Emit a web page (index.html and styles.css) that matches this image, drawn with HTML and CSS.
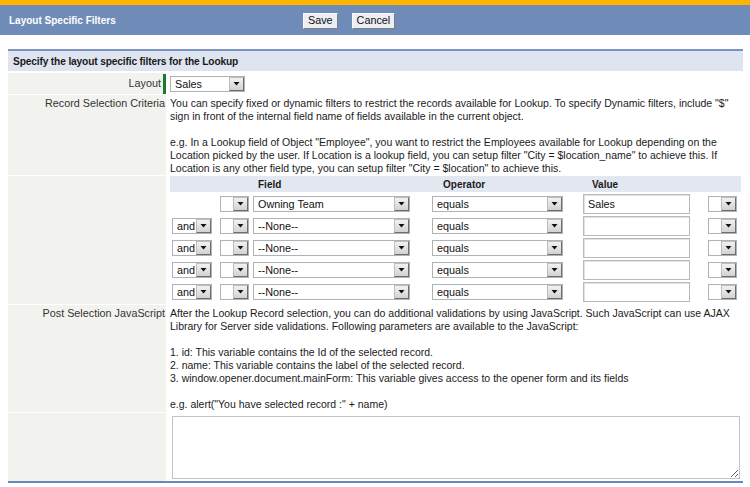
FILE: index.html
```html
<!DOCTYPE html>
<html>
<head>
<meta charset="utf-8">
<title>Layout Specific Filters</title>
<link rel="stylesheet" href="styles.css">
</head>
<body>
<div class="topbar"></div>
<div class="header">
  <div class="title">Layout Specific Filters</div>
  <div class="actions">
    <button class="btn">Save</button>
    <button class="btn">Cancel</button>
  </div>
</div>
<div class="page">
  <div class="section">
    <div class="section-head">Specify the layout specific filters for the Lookup</div>
    <div class="detail">
      <div class="lbl lbl-req"><span class="lbl-text">Layout</span><span class="req"></span></div>
      <div class="val val-layout">
        <span class="sel sel-layout"><span class="sel-text">Sales</span><span class="sel-btn"><svg width="7" height="4" viewBox="0 0 7 4"><path d="M0.5 0h6L3.5 3.5z"/></svg></span></span>
      </div>

      <div class="lbl lbl-top">Record Selection Criteria</div>
      <div class="val val-text val-record">
        <p>You can specify fixed or dynamic filters to restrict the records available for Lookup. To specify Dynamic filters, include "$" sign in front of the internal field name of fields available in the current object.</p>
        <p>e.g. In a Lookup field of Object "Employee", you want to restrict the Employees available for Lookup depending on the Location picked by the user. If Location is a lookup field, you can setup filter "City = $location_name" to achieve this. If Location is any other field type, you can setup filter "City = $location" to achieve this.</p>
      </div>

      <div class="lbl"></div>
      <div class="val val-filters">
        <div class="ftable">
          <div class="frow fhead">
            <span class="c-and"></span>
            <span class="c-b1"></span>
            <span class="c-field h-field">Field</span>
            <span class="c-op h-op">Operator</span>
            <span class="c-val h-val">Value</span>
            <span class="c-b2"></span>
          </div>

          <div class="frow">
            <span class="c-and"></span>
            <span class="sel c-b1"><span class="sel-text"></span><span class="sel-btn"><svg width="7" height="4" viewBox="0 0 7 4"><path d="M0.5 0h6L3.5 3.5z"/></svg></span></span>
            <span class="sel c-field"><span class="sel-text">Owning Team</span><span class="sel-btn"><svg width="7" height="4" viewBox="0 0 7 4"><path d="M0.5 0h6L3.5 3.5z"/></svg></span></span>
            <span class="sel c-op"><span class="sel-text">equals</span><span class="sel-btn"><svg width="7" height="4" viewBox="0 0 7 4"><path d="M0.5 0h6L3.5 3.5z"/></svg></span></span>
            <span class="inp c-val">Sales</span>
            <span class="sel c-b2"><span class="sel-text"></span><span class="sel-btn"><svg width="7" height="4" viewBox="0 0 7 4"><path d="M0.5 0h6L3.5 3.5z"/></svg></span></span>
          </div>

          <div class="frow">
            <span class="sel c-and"><span class="sel-text">and</span><span class="sel-btn"><svg width="7" height="4" viewBox="0 0 7 4"><path d="M0.5 0h6L3.5 3.5z"/></svg></span></span>
            <span class="sel c-b1"><span class="sel-text"></span><span class="sel-btn"><svg width="7" height="4" viewBox="0 0 7 4"><path d="M0.5 0h6L3.5 3.5z"/></svg></span></span>
            <span class="sel c-field"><span class="sel-text">--None--</span><span class="sel-btn"><svg width="7" height="4" viewBox="0 0 7 4"><path d="M0.5 0h6L3.5 3.5z"/></svg></span></span>
            <span class="sel c-op"><span class="sel-text">equals</span><span class="sel-btn"><svg width="7" height="4" viewBox="0 0 7 4"><path d="M0.5 0h6L3.5 3.5z"/></svg></span></span>
            <span class="inp c-val"></span>
            <span class="sel c-b2"><span class="sel-text"></span><span class="sel-btn"><svg width="7" height="4" viewBox="0 0 7 4"><path d="M0.5 0h6L3.5 3.5z"/></svg></span></span>
          </div>

          <div class="frow">
            <span class="sel c-and"><span class="sel-text">and</span><span class="sel-btn"><svg width="7" height="4" viewBox="0 0 7 4"><path d="M0.5 0h6L3.5 3.5z"/></svg></span></span>
            <span class="sel c-b1"><span class="sel-text"></span><span class="sel-btn"><svg width="7" height="4" viewBox="0 0 7 4"><path d="M0.5 0h6L3.5 3.5z"/></svg></span></span>
            <span class="sel c-field"><span class="sel-text">--None--</span><span class="sel-btn"><svg width="7" height="4" viewBox="0 0 7 4"><path d="M0.5 0h6L3.5 3.5z"/></svg></span></span>
            <span class="sel c-op"><span class="sel-text">equals</span><span class="sel-btn"><svg width="7" height="4" viewBox="0 0 7 4"><path d="M0.5 0h6L3.5 3.5z"/></svg></span></span>
            <span class="inp c-val"></span>
            <span class="sel c-b2"><span class="sel-text"></span><span class="sel-btn"><svg width="7" height="4" viewBox="0 0 7 4"><path d="M0.5 0h6L3.5 3.5z"/></svg></span></span>
          </div>

          <div class="frow">
            <span class="sel c-and"><span class="sel-text">and</span><span class="sel-btn"><svg width="7" height="4" viewBox="0 0 7 4"><path d="M0.5 0h6L3.5 3.5z"/></svg></span></span>
            <span class="sel c-b1"><span class="sel-text"></span><span class="sel-btn"><svg width="7" height="4" viewBox="0 0 7 4"><path d="M0.5 0h6L3.5 3.5z"/></svg></span></span>
            <span class="sel c-field"><span class="sel-text">--None--</span><span class="sel-btn"><svg width="7" height="4" viewBox="0 0 7 4"><path d="M0.5 0h6L3.5 3.5z"/></svg></span></span>
            <span class="sel c-op"><span class="sel-text">equals</span><span class="sel-btn"><svg width="7" height="4" viewBox="0 0 7 4"><path d="M0.5 0h6L3.5 3.5z"/></svg></span></span>
            <span class="inp c-val"></span>
            <span class="sel c-b2"><span class="sel-text"></span><span class="sel-btn"><svg width="7" height="4" viewBox="0 0 7 4"><path d="M0.5 0h6L3.5 3.5z"/></svg></span></span>
          </div>

          <div class="frow">
            <span class="sel c-and"><span class="sel-text">and</span><span class="sel-btn"><svg width="7" height="4" viewBox="0 0 7 4"><path d="M0.5 0h6L3.5 3.5z"/></svg></span></span>
            <span class="sel c-b1"><span class="sel-text"></span><span class="sel-btn"><svg width="7" height="4" viewBox="0 0 7 4"><path d="M0.5 0h6L3.5 3.5z"/></svg></span></span>
            <span class="sel c-field"><span class="sel-text">--None--</span><span class="sel-btn"><svg width="7" height="4" viewBox="0 0 7 4"><path d="M0.5 0h6L3.5 3.5z"/></svg></span></span>
            <span class="sel c-op"><span class="sel-text">equals</span><span class="sel-btn"><svg width="7" height="4" viewBox="0 0 7 4"><path d="M0.5 0h6L3.5 3.5z"/></svg></span></span>
            <span class="inp c-val"></span>
            <span class="sel c-b2"><span class="sel-text"></span><span class="sel-btn"><svg width="7" height="4" viewBox="0 0 7 4"><path d="M0.5 0h6L3.5 3.5z"/></svg></span></span>
          </div>
        </div>
      </div>

      <div class="lbl lbl-top lbl-post">Post Selection JavaScript</div>
      <div class="val val-text val-post">
        <p>After the Lookup Record selection, you can do additional validations by using JavaScript. Such JavaScript can use AJAX Library for Server side validations. Following parameters are available to the JavaScript:</p>
        <p>1. id: This variable contains the Id of the selected record.<br>2. name: This variable contains the label of the selected record.<br>3. window.opener.document.mainForm: This variable gives access to the opener form and its fields</p>
        <p>e.g. alert("You have selected record :" + name)</p>
      </div>

      <div class="lbl"></div>
      <div class="val val-area"><textarea class="script-area"></textarea></div>
    </div>
  </div>
</div>
</body>
</html>
```

FILE: styles.css
```css
* { box-sizing: border-box; }
html, body { margin: 0; padding: 0; background: #fff; }
body {
  font-family: "Liberation Sans", Arial, sans-serif;
  font-size: 10.8px;
  color: #1a1a1a;
}

.topbar { height: 5px; background: #ffb400; }

.header {
  height: 30px;
  background: #6f8cb9;
  display: flex;
  align-items: center;
  padding-left: 9px;
}
.title {
  width: 294px;
  color: #fff;
  font-weight: bold;
  font-size: 10px;
}
.actions { display: flex; gap: 14px; padding-top: 1px; }
.btn {
  font-family: "Liberation Sans", Arial, sans-serif;
  font-size: 10.8px;
  color: #111;
  height: 16px;
  padding: 0 4px;
  line-height: 13px;
  background: #eceef3;
  border: 1px solid;
  border-color: #fafafa #7e7e7e #7e7e7e #fafafa;
  border-radius: 0;
}

.page { padding: 14px 7px 0 8px; }

.section {
  border-top: 2px solid #7893c1;
  border-bottom: 2px solid #6689c6;
  box-shadow: 0 -1px 0 #dde3ee inset;
}
.section-head {
  height: 20px;
  background: #dfe5f0;
  font-weight: bold;
  font-size: 10.2px;
  letter-spacing: -0.15px;
  color: #1a1a1a;
  padding: 5px 0 0 5px;
  margin-bottom: 2px;
}

.detail {
  display: grid;
  grid-template-columns: 158px 1fr;
  row-gap: 1px;
}
.lbl {
  background: #f2f3ef;
  color: #333;
  text-align: right;
  padding-right: 1px;
  line-height: 13px;
}
.lbl-top { padding-top: 2px; }
.lbl-req {
  display: flex;
  justify-content: flex-end;
  align-items: stretch;
  padding-right: 0;
}
.lbl-req .lbl-text { padding-top: 4px; padding-right: 2px; }
.req {
  width: 3px;
  margin: 1px 0 0;
  background: #1f7a26;
}

.val { background: #fff; }
.val-layout { padding: 3px 0 2px 4px; }
.val-text { padding: 2px 0 0 4px; line-height: 13px; font-size: 10.5px; }
.val-text p { margin: 0 0 13px; }
.val-text p:last-child { margin-bottom: 0; }
.val-post { padding-bottom: 1px; }
.val-filters { padding: 0 2px 1px 4px; }
.val-area { padding: 3px 3px 2px 6px; }

/* select look-alike */
.sel {
  display: inline-flex;
  align-items: stretch;
  height: 16px;
  border: 1px solid #b0b3b6;
  background: #fff;
  line-height: 14px;
}
.sel-text {
  flex: 1;
  padding-left: 4px;
  white-space: nowrap;
  overflow: hidden;
  color: #111;
}
.sel-btn {
  width: 15px;
  display: flex;
  align-items: center;
  justify-content: center;
  background: linear-gradient(#f2f2f2, #d2d2d2);
  border: 1px solid;
  border-color: #bdbdbd #6e6e6e #6e6e6e #bdbdbd;
}
.sel-btn svg { display: block; fill: #111; }
.sel-layout { width: 75px; }

/* filter table */
.ftable { display: flex; flex-direction: column; }
.frow {
  display: flex;
  align-items: center;
  height: 22px;
}
.frow.fhead {
  height: 17px;
  background: #e2e7f0;
  font-weight: bold;
  font-size: 10px;
  color: #1a1a1a;
  border-bottom: 1px solid #fff;
}
.c-and { width: 40px; margin-left: 2px; flex: none; }
.c-b1 { width: 29px; margin-left: 8px; flex: none; }
.c-field { width: 157px; margin-left: 4px; flex: none; }
.c-op { width: 131px; margin-left: 22px; flex: none; }
.c-val { width: 107px; margin-left: 20px; flex: none; }
.c-b2 { width: 29px; margin-left: 18px; flex: none; }
.sel-text:empty { padding-left: 0; }

.h-field { padding-left: 5px; }
.h-op { padding-left: 11px; }
.h-val { padding-left: 9px; }

.inp {
  display: block;
  height: 20px;
  border: 1px solid #b9b9b9;
  box-shadow: inset 1px 1px 0 #e2e2e2;
  background: #fff;
  padding: 2px 0 0 4px;
  line-height: 15px;
  color: #111;
}

.script-area {
  display: block;
  width: 568px;
  height: 63px;
  border: 1px solid #c3c3c3;
  margin: 0;
  padding: 2px;
  font-family: "Liberation Mono", monospace;
  font-size: 11px;
  background: #fff;
}
```
